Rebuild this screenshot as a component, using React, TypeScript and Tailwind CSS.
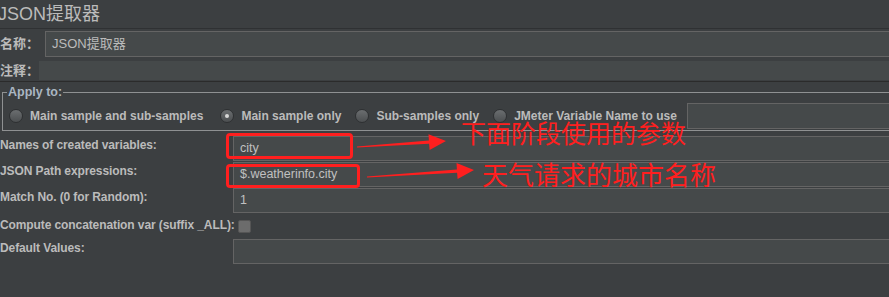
import React from "react";

const cjk = "font-['Liberation_Sans','Noto_Sans_CJK_SC',sans-serif]";

function Radio({ checked, label }: { checked?: boolean; label: string }) {
  return (
    <div className="flex items-center gap-[7px] shrink-0">
      <span className="w-[14px] h-[14px] rounded-full border border-[#2e3032] bg-gradient-to-b from-[#6b6e70] to-[#4c4f51] flex items-center justify-center">
        {checked && <span className="w-[4px] h-[4px] rounded-full bg-[#d8d8d8]" />}
      </span>
      <span className="font-bold whitespace-nowrap">{label}</span>
    </div>
  );
}

function arrow(x1: number, y1: number, x2: number, y2: number, head = 17, hw = 8, sw = 1.6) {
  const dx = x2 - x1, dy = y2 - y1;
  const len = Math.hypot(dx, dy);
  const ux = dx / len, uy = dy / len;
  const nx = -uy, ny = ux;
  const bx = x2 - ux * head, by = y2 - uy * head;
  const pts = [
    [x1 + nx * 0.6, y1 + ny * 0.6],
    [bx + nx * sw, by + ny * sw],
    [bx + nx * hw, by + ny * hw],
    [x2, y2],
    [bx - nx * hw, by - ny * hw],
    [bx - nx * sw, by - ny * sw],
    [x1 - nx * 0.6, y1 - ny * 0.6],
  ];
  return pts.map(p => p.map(v => v.toFixed(1)).join(",")).join(" ");
}

export default function App() {
  const rows = [
    { label: "Names of created variables:", value: "city" },
    { label: "JSON Path expressions:", value: "$.weatherinfo.city" },
    { label: "Match No. (0 for Random):", value: "1" },
  ];

  return (
    <div className={`relative w-[889px] h-[297px] overflow-hidden bg-[#3c3f41] text-[#bbbbbb] text-[12px] ${cjk}`}>
      <div className="w-[900px] flex flex-col">
        {/* title */}
        <div className="h-[29px] border-b border-[#2f3133] flex items-center">
          <span className="text-[18px] -ml-[2px] leading-none whitespace-nowrap">JSON提取器</span>
        </div>

        {/* name */}
        <div className="mt-[2px] flex items-center h-[26px]">
          <span className="w-[45px] shrink-0 whitespace-nowrap text-[13px] font-bold">名称：</span>
          <div className="flex-1 h-[26px] bg-[#45494a] border border-[#646464] flex items-center pl-[6px] text-[13px]">
            JSON提取器
          </div>
        </div>

        {/* comment */}
        <div className="mt-[4px] flex items-center h-[19px]">
          <span className="w-[39px] shrink-0 whitespace-nowrap text-[13px] font-bold">注释：</span>
          <div className="flex-1 h-[19px] bg-[#45494a]" />
        </div>
        <div className="h-px bg-[#2b2b2b] mt-px" />

        {/* apply to */}
        <fieldset className="mt-[3px] ml-[2px] border border-[#8f9192] pl-[6px] pr-0 pt-[3px] pb-0">
          <legend className="px-[1px] font-bold text-[#aab6c2] text-[12.5px] leading-[14px] ml-[-2px]">Apply to:</legend>
          <div className="flex items-center h-[28px]">
            <Radio label="Main sample and sub-samples" />
            <div className="w-[17px] shrink-0" />
            <Radio checked label="Main sample only" />
            <div className="w-[14px] shrink-0" />
            <Radio label="Sub-samples only" />
            <div className="w-[14px] shrink-0" />
            <Radio label="JMeter Variable Name to use" />
            <div className="ml-[10px] flex-1 h-[26px] bg-[#45494a] border border-[#646464]" />
          </div>
        </fieldset>

        {/* fields */}
        <div className="mt-[5px] grid grid-cols-[233px_1fr] gap-y-[1px]">
          {rows.map(r => (
            <React.Fragment key={r.label}>
              <span className="font-bold pt-[1px] leading-[16px] whitespace-nowrap tracking-[-0.1px]">{r.label}</span>
              <div className="h-[25px] bg-[#45494a] border border-[#646464] flex items-center pl-[6px] text-[12.5px] text-[#c0c0c0]">
                {r.value}
              </div>
            </React.Fragment>
          ))}
          <span className="font-bold pt-[3px] leading-[16px] whitespace-nowrap tracking-[-0.1px]">Compute concatenation var (suffix _ALL):</span>
          <div className="h-[24px] flex items-center">
            <span className="ml-[5px] w-[13px] h-[13px] rounded-[2px] bg-[#6c6c6c] border border-[#555]" />
          </div>
          <span className="font-bold pt-[1px] leading-[16px] whitespace-nowrap tracking-[-0.1px]">Default Values:</span>
          <div className="h-[25px] bg-[#45494a] border border-[#646464]" />
        </div>
      </div>

      {/* annotations */}
      <div className="absolute left-[226px] top-[133px] w-[127px] h-[26px] border-[3px] border-[#ff1f1f] rounded-[4px]" />
      <div className="absolute left-[226px] top-[164px] w-[134px] h-[24px] border-[3px] border-[#ff1f1f] rounded-[4px]" />
      <svg className="absolute left-0 top-0" width="889" height="297">
        <polygon points={arrow(357, 147, 446, 141)} fill="#ff1f1f" />
        <polygon points={arrow(367, 177, 474, 170)} fill="#ff1f1f" />
      </svg>
      <div className="absolute left-[461px] top-[120px] text-[25px] leading-none text-[#ff1f1f] font-['Noto_Sans_CJK_SC',sans-serif] whitespace-nowrap">
        下面阶段使用的参数
      </div>
      <div className="absolute left-[482px] top-[161px] text-[26px] leading-none text-[#ff1f1f] font-['Noto_Sans_CJK_SC',sans-serif] whitespace-nowrap">
        天气请求的城市名称
      </div>
    </div>
  );
}
